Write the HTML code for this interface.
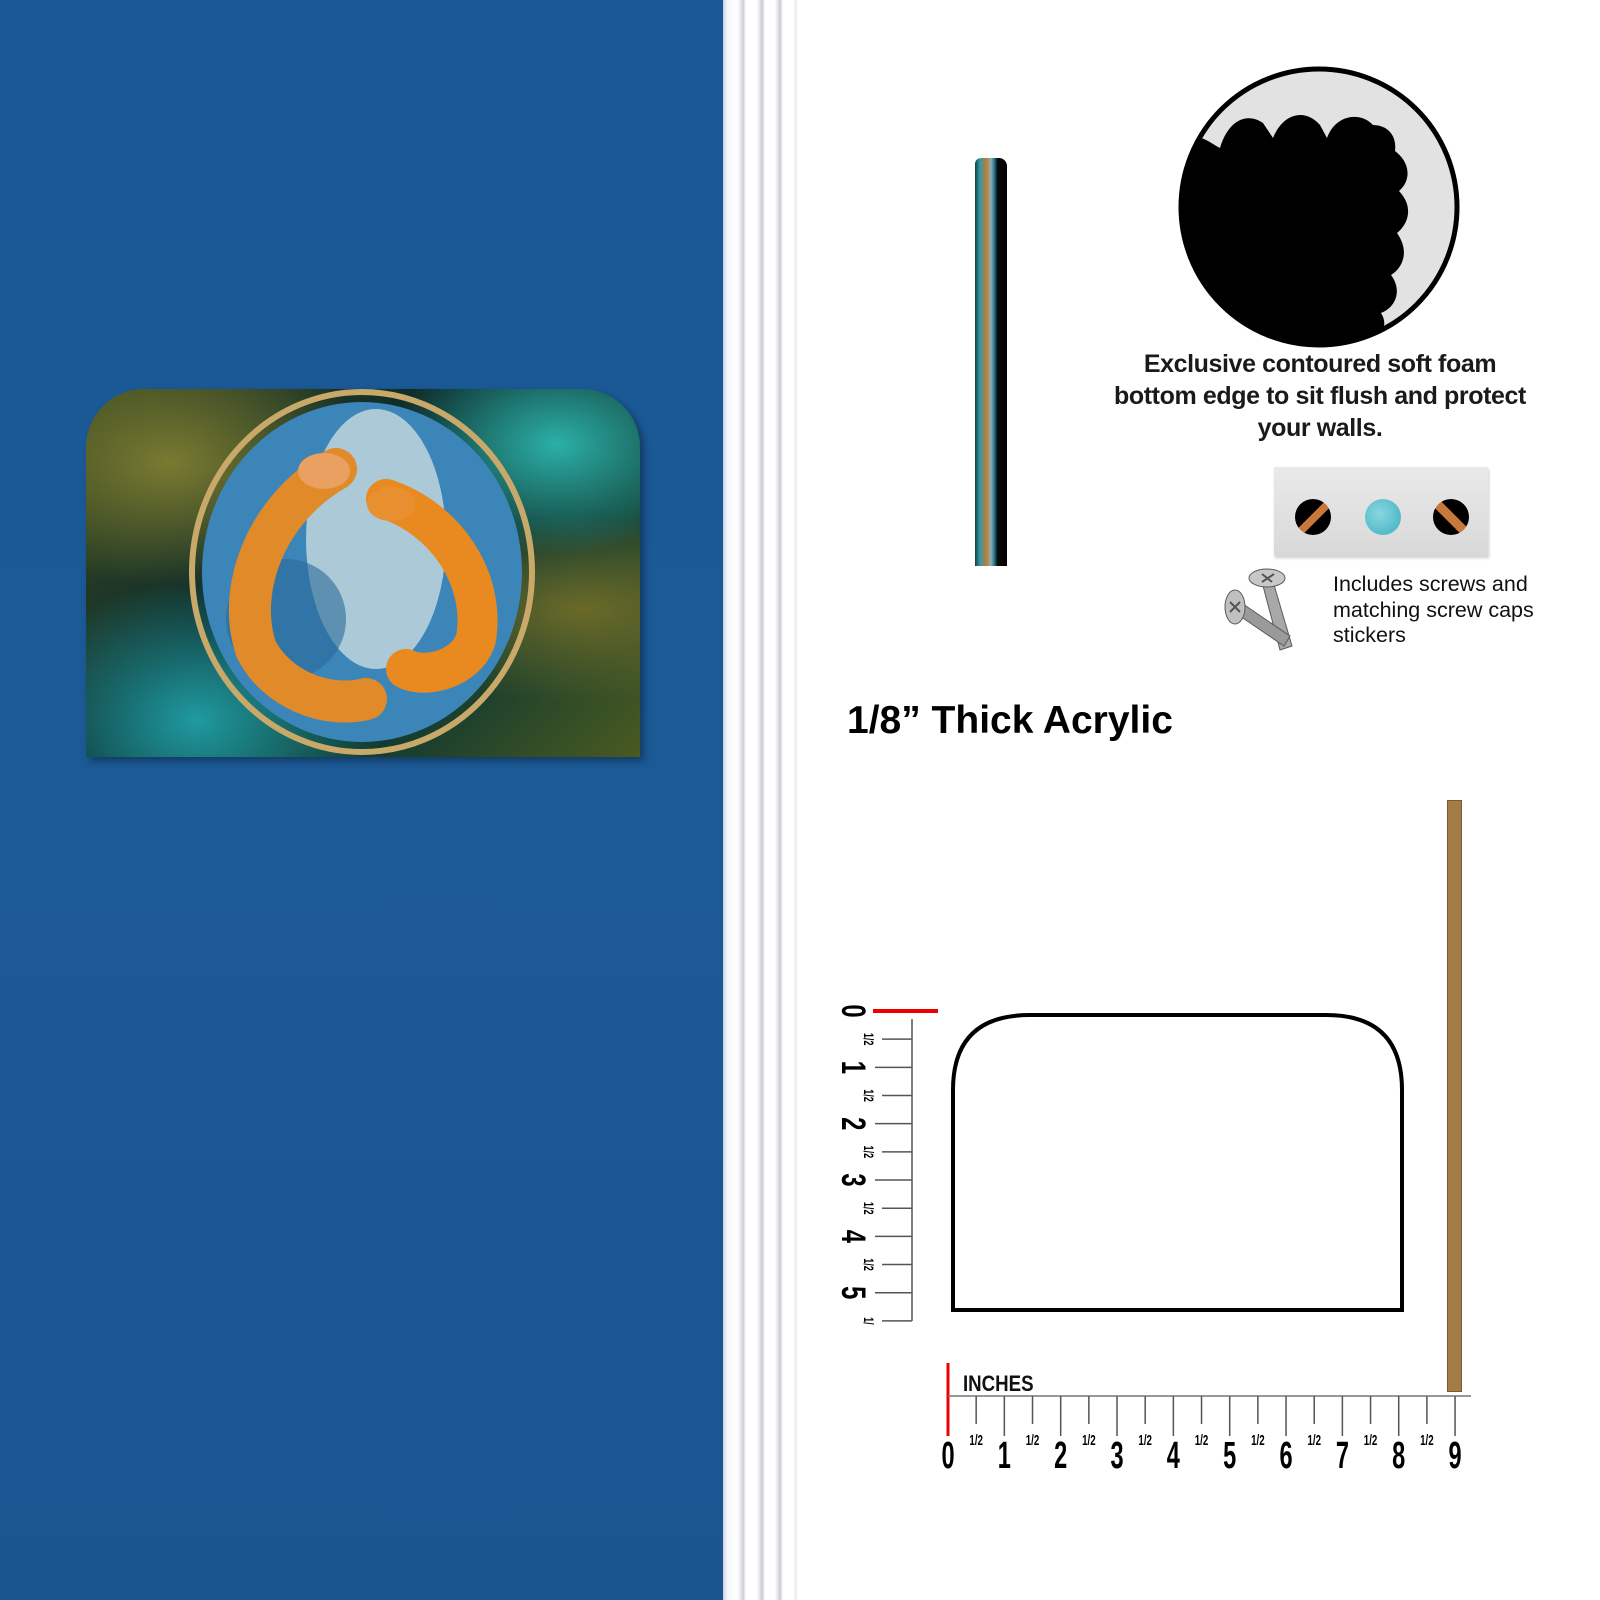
<!DOCTYPE html>
<html><head><style>
*{margin:0;padding:0;box-sizing:border-box}
body{width:1600px;height:1600px;position:relative;background:#fff;overflow:hidden;font-family:"Liberation Sans",sans-serif}
.a{position:absolute}
</style></head><body>
<div class="a" style="left:0;top:0;width:723px;height:1600px;background:linear-gradient(180deg,#1a5897,#1c5a96 50%,#1a5590)"></div>
<div class="a" style="left:723px;top:0;width:74px;height:1600px;background:linear-gradient(90deg,#c9d2e2 0,#f4f6f9 4px,#fff 14px,#e6e8ec 18px,#c8ccd2 20px,#fff 23px,#fff 34px,#e0e2e6 37px,#c4c8ce 39px,#fff 42px,#fff 52px,#e0e2e6 55px,#c8ccd2 57px,#fff 60px,#fff 70px,#e8e8ea 74px)"></div>

<!-- artwork -->
<div class="a" style="left:86px;top:389px;width:554px;height:368px;border-radius:58px 58px 0 0;overflow:hidden;box-shadow:4px 4px 8px rgba(0,0,0,.35);background:radial-gradient(ellipse at 85% 15%,#2bb0a8 0,transparent 25%),radial-gradient(ellipse at 15% 20%,#7a7a30 0,transparent 30%),radial-gradient(ellipse at 90% 60%,#6a6a28 0,transparent 30%),radial-gradient(ellipse at 20% 90%,#1f9aa0 0,transparent 30%),linear-gradient(135deg,#3a4a20,#0d2a2a 40%,#123a30 70%,#4a5a20)">
  <svg width="554" height="368" viewBox="0 0 554 368">
    <ellipse cx="276" cy="183" rx="170" ry="180" fill="none" stroke="#c9a96a" stroke-width="6"/>
    <ellipse cx="276" cy="183" rx="160" ry="170" fill="#3c85b8"/>
    <ellipse cx="290" cy="150" rx="70" ry="130" fill="#dce6e4" opacity=".7"/>
    <ellipse cx="200" cy="230" rx="60" ry="60" fill="#2a6a9a" opacity=".6"/>
    <path d="M250 80 C180 120 150 200 170 260 C190 300 240 320 280 310" fill="none" stroke="#e08a2a" stroke-width="42" stroke-linecap="round"/>
    <path d="M300 110 C360 130 400 190 390 250 C380 280 340 290 320 280" fill="none" stroke="#e88a20" stroke-width="40" stroke-linecap="round"/>
    <ellipse cx="238" cy="82" rx="26" ry="18" fill="#e9a060"/>
    <ellipse cx="305" cy="115" rx="24" ry="17" fill="#e89030"/>
  </svg>
</div>

<!-- edge profile -->
<div class="a" style="left:975px;top:158px;width:32px;height:408px;border-radius:6px 8px 0 0;background:linear-gradient(90deg,#1a3a3a 0,#2a9ab0 15%,#c07a30 35%,#8ab0b8 50%,#1a6a80 62%,#0a0a0a 70%,#000 100%)"></div>

<!-- foam circle -->
<svg class="a" style="left:1175px;top:63px" width="290" height="290" viewBox="0 0 290 290">
  <circle cx="144" cy="144" r="138" fill="#e2e2e2" stroke="#000" stroke-width="5"/>
  <clipPath id="c"><circle cx="144" cy="144" r="136"/></clipPath>
  <path clip-path="url(#c)" d="M0 95 L18 78 C25 70 35 80 45 85 C52 60 70 48 88 60 L98 75 C108 50 130 45 145 62 L152 75 C160 52 185 48 198 62 C212 62 222 72 220 88 C236 100 236 118 224 128 C240 145 232 162 222 170 C236 190 226 206 216 212 C228 228 220 245 206 250 C214 262 206 275 196 280 L196 300 L0 300 Z" fill="#000"/>
</svg>
<div class="a" style="left:1080px;top:348px;width:480px;text-align:center;font-weight:bold;font-size:25px;line-height:32px;color:#1a1a1a;letter-spacing:-.4px">Exclusive contoured soft foam<br>bottom edge to sit flush and protect<br>your walls.</div>

<!-- sticker strip -->
<div class="a" style="left:1274px;top:467px;width:214px;height:89px;background:linear-gradient(180deg,#eaeaea,#d8d8d8);box-shadow:1px 2px 3px rgba(0,0,0,.2)"></div>
<div class="a" style="left:1295px;top:499px;width:36px;height:36px;border-radius:50%;background:linear-gradient(135deg,#000 45%,#c8783a 45%,#c8783a 60%,#000 60%)"></div>
<div class="a" style="left:1365px;top:499px;width:36px;height:36px;border-radius:50%;background:radial-gradient(circle at 40% 40%,#8ad6e0,#3ab0c0)"></div>
<div class="a" style="left:1433px;top:499px;width:36px;height:36px;border-radius:50%;background:linear-gradient(45deg,#000 40%,#c8783a 40%,#c8783a 58%,#000 58%)"></div>

<!-- screws -->
<svg class="a" style="left:1222px;top:568px" width="90" height="92" viewBox="0 0 90 92">
  <g stroke="#5a5a5a" stroke-width="1">
    <path d="M40 14 L58 82 L70 78 L50 10 Z" fill="#a8a8a8"/>
    <ellipse cx="45" cy="10" rx="18" ry="9" fill="#c8c8c8"/>
    <path d="M40 6 L50 14 M52 6 L40 14" stroke="#555" stroke-width="2"/>
    <path d="M12 44 L62 78 L68 68 L18 34 Z" fill="#9a9a9a"/>
    <ellipse cx="13" cy="39" rx="10" ry="17" fill="#c0c0c0"/>
    <path d="M8 34 L18 44 M18 34 L8 44" stroke="#555" stroke-width="2"/>
  </g>
</svg>
<div class="a" style="left:1333px;top:572px;font-size:21.5px;line-height:25.5px;color:#111">Includes screws and<br>matching screw caps<br>stickers</div>

<div class="a" style="left:847px;top:699px;font-size:39px;font-weight:bold;color:#000">1/8” Thick Acrylic</div>

<!-- brown bar -->
<div class="a" style="left:1447px;top:800px;width:15px;height:592px;background:#a47c4a;border:1px solid #7a5a30"></div>

<svg class="a" style="left:0;top:0" width="1600" height="1600">
  <path d="M953 1310 L953 1090 Q953 1015 1030 1015 L1326 1015 Q1402 1015 1402 1090 L1402 1310 Z" fill="none" stroke="#000" stroke-width="4"/>
  <line x1="873" y1="1011" x2="938" y2="1011" stroke="#e00" stroke-width="4"/>
  <line x1="912" y1="1019" x2="912" y2="1321" stroke="#555" stroke-width="1.5"/>
  <g id="vt" stroke="#555" stroke-width="1.5"></g>
  <g id="vn" font-family="Liberation Sans,sans-serif" font-weight="bold" fill="#000"></g>
  <line x1="948" y1="1363" x2="948" y2="1436" stroke="#e00" stroke-width="3"/>
  <line x1="948" y1="1396" x2="1471" y2="1396" stroke="#777" stroke-width="1.5"/>
  <g id="ht" stroke="#555" stroke-width="1.5"></g>
  <text x="963" y="1391" font-size="22" font-weight="bold" fill="#111" transform="translate(963 0) scale(0.85 1) translate(-963 0)" font-family="Liberation Sans,sans-serif">INCHES</text>
  <g id="hn" font-family="Liberation Sans,sans-serif" font-weight="bold" fill="#000" text-anchor="middle"></g>
</svg>
<script>
var t='',n='',vt='',vn='';
for(var i=0;i<=18;i++){var x=948+i*28.17;
 if(i>0)t+='<line x1="'+x+'" y1="1396" x2="'+x+'" y2="'+(i%2?1424:1436)+'"/>';
 if(i%2==0)n+='<text transform="translate('+x+' 1468) scale(0.62 1)" font-size="38">'+(i/2)+'</text>';
 else n+='<text transform="translate('+x+' 1445) scale(0.65 1)" font-size="15">1/2</text>';}
for(var j=1;j<=11;j++){var y=1011+j*28.17;
 vt+='<line x1="'+(j%2?882:875)+'" y1="'+y+'" x2="912" y2="'+y+'"/>';
 if(j%2==1)vn+='<text transform="translate(864 '+y+') rotate(90) scale(0.65 1)" text-anchor="middle" font-size="14">'+(j==11?'1/':'1/2')+'</text>';}
for(var k=0;k<=5;k++){var y2=1011+k*56.34;
 vn+='<text transform="translate(842 '+y2+') rotate(90) scale(0.7 1)" text-anchor="middle" font-size="34">'+k+'</text>';}
document.getElementById('ht').innerHTML=t;document.getElementById('hn').innerHTML=n;
document.getElementById('vt').innerHTML=vt;document.getElementById('vn').innerHTML=vn;
</script>
</body></html>
